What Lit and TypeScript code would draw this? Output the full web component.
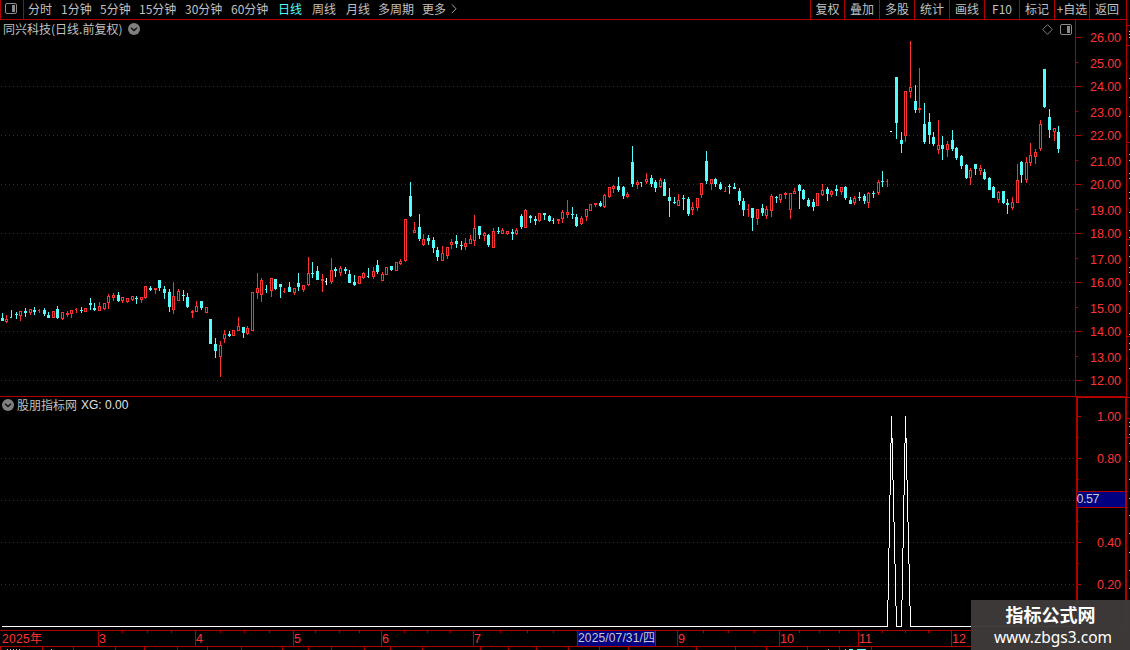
import { LitElement, html, svg, css } from "lit";
import { customElement, property } from "lit/decorators.js";
import { classMap } from "lit/directives/class-map.js";

// centre x, high, body top, body bottom, low, kind
// kind: u = rising, d = falling, U/D = left-hand tick only, W/w = unchanged (white)
const CANDLES = `
2,313,318,321,321,d 6,315,319,322,323,u 11,310,317,318,318,D 16,312,314,315,319,d 20,311,311,316,321,u
25,308,311,313,317,d 30,309,309,313,315,u 34,307,310,312,315,d 39,309,310,311,313,U 44,308,310,314,316,d
48,312,315,318,318,d 53,311,311,318,318,u 57,306,309,318,319,d 62,312,312,319,320,u 67,311,313,315,317,u
71,310,310,314,318,u 76,308,309,310,313,U 81,307,310,311,313,d 85,308,308,312,312,u 90,298,303,305,310,d
94,303,308,310,311,d 99,302,306,311,311,u 104,303,303,309,310,u 108,294,296,303,309,u 113,293,295,298,301,u
118,292,295,301,302,d 122,297,297,301,303,u 127,298,298,302,303,u 132,296,296,300,301,u 136,296,298,299,304,d
141,297,297,300,303,u 145,286,286,298,299,u 150,286,288,290,291,d 155,288,288,290,294,u 159,280,280,288,291,d
164,286,289,293,299,d 169,289,292,307,312,d 173,282,296,310,314,u 178,289,291,301,301,u 183,290,295,296,301,d
187,293,297,307,308,d 192,310,311,313,318,u 196,301,306,312,312,u 201,301,301,308,310,d 206,307,307,313,313,u
210,319,319,344,344,d 215,338,344,351,358,d 220,341,345,357,377,u 224,330,334,339,343,u 229,331,334,336,337,d
233,330,330,336,336,u 238,317,326,331,331,u 243,327,327,333,338,d 247,326,328,334,335,u 252,292,292,331,331,u
257,273,288,293,299,u 261,278,280,295,302,u 266,285,289,290,293,D 271,278,278,291,297,u 275,279,279,289,290,d
280,284,284,287,298,d 284,288,291,292,293,U 289,282,287,292,292,d 294,288,288,293,295,u 298,273,283,287,291,d
303,285,285,290,292,u 308,257,273,285,286,u 312,262,273,274,278,d 317,266,271,280,280,d 322,274,279,281,292,u
326,278,281,282,285,W 331,258,270,282,284,u 335,267,269,271,277,d 340,266,268,273,276,u 345,267,269,271,274,d
349,270,274,283,283,d 354,275,282,285,286,d 359,276,276,284,284,u 363,272,273,278,279,u 368,268,276,277,278,D
373,267,271,277,279,u 377,260,265,272,274,d 382,272,274,281,281,u 386,267,267,275,275,u 391,266,266,270,271,d
396,262,262,271,271,u 400,259,261,264,265,u 405,219,219,261,262,u 410,182,196,216,217,d 414,222,230,233,233,u
419,214,227,239,241,d 423,234,239,245,246,u 428,235,238,241,245,d 433,237,240,248,253,d 437,247,250,257,261,d
442,246,253,261,261,u 447,247,247,256,259,u 451,239,242,245,249,u 456,235,241,244,248,d 461,241,245,246,250,d
465,238,243,247,250,u 470,235,239,244,244,u 474,215,228,241,246,u 479,226,226,235,239,d 484,232,233,236,241,u
488,234,235,245,247,d 493,228,231,248,248,u 498,227,231,232,234,d 502,228,230,234,234,u 507,231,231,234,235,u
512,229,232,234,240,d 516,228,230,234,235,u 521,214,216,227,229,d 525,209,210,228,228,u 530,215,216,218,223,d
535,216,219,221,225,d 539,213,213,221,222,u 544,213,213,215,220,d 549,215,216,221,222,d 553,218,220,221,224,D
558,219,219,221,224,u 562,210,212,219,223,u 567,200,212,215,218,u 572,207,214,215,219,d 576,214,217,226,227,d
581,216,218,224,225,u 586,209,209,217,221,u 590,204,204,211,211,u 595,203,203,205,207,u 600,201,203,206,207,d
604,194,195,207,208,u 609,187,187,197,198,u 613,185,186,189,193,u 618,177,186,190,192,d 623,186,187,196,199,d
627,192,194,197,198,u 632,146,162,184,187,d 637,180,182,185,189,u 641,182,182,183,187,D 646,173,179,182,184,u
651,175,178,184,187,d 655,180,182,188,192,d 660,178,180,187,188,u 664,179,182,196,196,d 669,188,197,201,217,d
674,197,202,203,204,d 678,194,200,206,206,u 683,195,198,199,210,d 688,197,199,214,216,d 692,202,207,210,215,u
697,198,198,208,211,u 701,183,183,195,198,u 706,151,161,181,184,d 711,179,179,184,190,u 715,178,179,184,187,d
720,182,184,189,190,d 725,187,191,192,192,U 729,184,186,187,194,d 734,183,187,189,189,d 739,188,191,201,205,d
743,198,201,210,216,d 748,204,209,210,217,U 752,208,208,218,231,d 757,209,209,219,225,u 762,204,208,213,216,d
766,206,209,216,219,u 771,194,196,211,217,u 776,196,197,198,203,d 780,194,194,200,203,u 785,192,193,195,199,u
790,193,193,210,219,u 794,188,191,194,194,u 799,184,185,191,209,d 803,189,190,199,200,d 808,198,200,206,207,d
813,199,202,207,211,d 817,193,193,206,206,u 822,184,190,195,196,u 827,187,189,194,201,d 831,190,191,195,197,u
836,185,189,191,196,d 841,187,187,192,195,u 845,186,187,198,200,d 850,197,200,204,204,d 854,196,198,203,205,u
859,192,197,198,201,d 864,194,196,201,204,d 868,192,193,203,208,u 873,191,193,194,198,d 878,180,182,193,195,u
882,171,181,182,187,d 887,179,181,182,187,U 891,131,131,132,132,w 896,77,77,123,139,d 901,132,140,144,153,d
905,91,91,136,142,u 910,41,87,92,98,u 915,85,101,110,113,d 919,68,108,110,113,u 924,103,124,142,144,d
929,113,122,135,144,d 933,132,137,144,146,d 938,120,145,150,154,u 942,136,145,149,160,d 947,141,144,150,157,u
952,130,140,149,151,d 956,147,148,158,160,d 961,155,156,166,169,d 966,164,165,178,179,d 970,168,170,178,185,u
975,164,164,169,175,d 980,165,168,171,175,u 984,169,172,179,180,d 989,177,178,190,190,d 993,186,187,198,198,d
998,191,192,200,203,u 1003,191,191,203,204,d 1007,199,203,205,214,d 1012,197,202,208,210,u 1017,164,180,203,203,u
1021,161,162,175,183,d 1026,157,162,180,183,u 1030,143,155,163,166,u 1035,149,152,157,164,u 1040,120,124,149,151,u
1044,69,69,107,108,d 1049,109,117,130,138,d 1054,128,128,132,141,u 1058,126,132,149,153,d`
  .trim().split(/\s+/).map((s) => {
    const p = s.split(",");
    return { x: +p[0], high: +p[1], top: +p[2], bottom: +p[3], low: +p[4], kind: p[5] };
  });

const PERIODS = ["分时", "1分钟", "5分钟", "15分钟", "30分钟", "60分钟", "日线", "周线", "月线", "多周期", "更多"];
const TOOLS = ["复权", "叠加", "多股", "统计", "画线", "F10", "标记", "+自选", "返回"];
const PRICES = Array.from({ length: 15 }, (_, i) => ({
  text: (26 - i).toFixed(2),
  tick: Math.round(37 + i * 24.5),
  label: i % 2 ? 63.5 + (i - 1) * 24.5 : 37.5 + i * 24.5,
  major: i % 2 === 0,
}));
const XG_LABELS: [string, number][] = [["1.00", 416], ["0.80", 458], ["0.40", 542], ["0.20", 584]];
const MONTHS: [string, number][] = [
  ["3", 98], ["4", 195], ["5", 293], ["6", 381], ["7", 473], ["9", 677], ["10", 779], ["11", 858], ["12", 951],
];
const WEEKS = [122, 147, 171, 220, 244, 269, 315, 339, 359, 404, 427, 450, 500, 527, 553, 703, 728, 754, 799, 819, 839, 882, 905, 928];
const LOWER_TICKS = [0, 42, 73, 115, 144, 177, 207, 241, 282, 308, 331, 364, 390, 422, 480, 508, 536, 568, 599, 628, 696, 735, 766, 807, 839, 871];
const EDGE_LINES = [25, 45, 142, 239, 336, 397, 418, 437];
const EDGE_MARKS = [31, 34, 37, 78, 97, 116, 154, 160, 173, 178, 192, 198, 212, 230, 237, 245, 256, 267, 272, 284, 291, 313, 334, 343, 349, 368, 422, 426, 434, 443, 461, 479, 498, 515, 533, 552, 570, 588];

const gridLine = (y: number) => svg`<path class="grid" d="M1 ${y + 0.5}H1075" />`;

const shared = css`
  :host { display: block; }
  svg { display: block; shape-rendering: crispEdges; }
  .grid { stroke: #b00000; stroke-dasharray: 1 3; fill: none; }
  .line { fill: #b00000; }
  .num { font: 12.5px "Liberation Sans", sans-serif; fill: #ff3232; }
`;

@customElement("round-toggle")
class RoundToggle extends LitElement {
  static styles = css`
    :host { display: block; width: 12px; height: 12px; }
    svg { display: block; }
  `;
  render() {
    return html`<svg width="12" height="12" viewBox="0 0 12 12">
      <circle cx="6" cy="6" r="6" fill="#808080" />
      <path d="M3 4.8L6 7.6L9 4.8" fill="none" stroke="#101010" stroke-width="1.4" />
    </svg>`;
  }
}

@customElement("split-icon")
class SplitIcon extends LitElement {
  static styles = css`
    :host { display: block; width: 12px; height: 11px; }
    svg { display: block; }
  `;
  render() {
    return html`<svg width="12" height="11" viewBox="0 0 12 11">
      <rect x=".5" y=".5" width="11" height="10" rx="1.5" fill="none" stroke="#8c8c8c" />
      <rect x="7" y="2" width="3" height="7" fill="#8c8c8c" />
    </svg>`;
  }
}

@customElement("top-bar")
class TopBar extends LitElement {
  @property() active = "日线";
  static styles = css`
    :host {
      display: flex; box-sizing: border-box; width: 1127px; height: 20px;
      border-bottom: 1px solid #b00000; color: #c0c0c0;
      font: 12px/17px "Noto Sans CJK SC", sans-serif; white-space: nowrap;
    }
    .toggle { box-sizing: border-box; width: 24px; padding: 3px 0 0 4px; border: solid #b00000; border-width: 0 1px; }
    .periods {
      display: grid; margin-left: 4px; flex: 1;
      grid-template-columns: 33px 39px 39px 46px 46px 47px 34px 34px 32px 44px 28px 10px;
    }
    .active { color: #54fcfc; }
    .more { margin-top: 4px; }
    .tools { display: grid; grid-template-columns: 34px repeat(7, 35px) 38px; }
    .tool { border-left: 1px solid #b00000; text-align: center; }
    .tool:last-child { border-right: 1px solid #b00000; padding-right: 2px; }
  `;
  render() {
    return html`
      <div class="toggle"><split-icon></split-icon></div>
      <div class="periods">
        ${PERIODS.map((p) => html`<span class=${classMap({ active: p === this.active })}>${p}</span>`)}
        <svg class="more" width="8" height="10" viewBox="0 0 8 10"><path d="M2 .5L6 4.8L2 9" fill="none" stroke="#a0a0a0" /></svg>
      </div>
      <div class="tools">${TOOLS.map((t) => html`<span class="tool">${t}</span>`)}</div>
    `;
  }
}

@customElement("price-chart")
class PriceChart extends LitElement {
  static styles = [shared, css`
    .title {
      display: flex; align-items: center; box-sizing: border-box; height: 20px; padding: 0 3px 2px; gap: 6px; color: #c0c0c0;
      font: 12px/18px "Noto Sans CJK SC", sans-serif;
    }
    .name { width: 119px; white-space: nowrap; }
    .title svg { margin: 0 1px 0 auto; }
    .u { fill: #ff3232; } .d { fill: #54fcfc; } .w { fill: #fff; } .hole { fill: #000; }
  `];
  private candle(c: (typeof CANDLES)[number]) {
    const cls = c.kind.toLowerCase();
    const left = c.kind !== c.kind.toLowerCase() || c.kind === "w";
    const h = c.bottom - c.top;
    return svg`<g class=${cls}>
      ${c.kind === "w" ? null : svg`<rect x=${c.x} y=${c.high} width="1" height=${c.low - c.high} />`}
      <rect x=${c.x - 1} y=${c.top} width=${left ? 2 : 3} height=${h} />
      ${c.kind === "u" && h > 2 ? svg`<rect class="hole" x=${c.x} y=${c.top + 1} width="1" height=${h - 2} />` : null}
    </g>`;
  }
  render() {
    return html`
      <div class="title">
        <span class="name">同兴科技(日线.前复权)</span><round-toggle></round-toggle>
        <svg width="11" height="11" viewBox="0 0 11 11"><path d="M5.5 .7L10.3 5.5L5.5 10.3L.7 5.5Z" fill="none" stroke="#808080" shape-rendering="auto" /></svg>
        <split-icon></split-icon>
      </div>
      <svg width="1075" height="356" viewBox="0 40 1075 356">
        ${[86, 135, 184, 233, 282, 331, 380].map(gridLine)}
        ${CANDLES.map((c) => this.candle(c))}
      </svg>`;
  }
}

@customElement("signal-chart")
class SignalChart extends LitElement {
  static styles = [shared, css`
    :host { border-top: 1px solid #b00000; }
    .title {
      display: flex; align-items: center; box-sizing: border-box; height: 17px; padding: 0 0 2px 2px; color: #c0c0c0;
      font: 12px/15px "Noto Sans CJK SC", sans-serif;
    }
    .name { margin: 0 4px 0 3px; }
    .value { padding-top: 2px; font: 12px/15px "Liberation Sans", sans-serif; color: #e0e0e0; }
    .signal { fill: #fff; }
  `];
  private spike(x: number) {
    const steps = [[600, 627], [548, 600], [495, 548], [443, 495], [416, 443], [438, 480], [480, 522], [522, 564], [564, 606], [606, 627]];
    return steps.map(([a, b], i) => svg`<rect x=${x + i} y=${a} width="1" height=${b - a} />`);
  }
  render() {
    return html`
      <div class="title"><round-toggle></round-toggle><span class="name">股朋指标网</span><span class="value">XG: 0.00</span></div>
      <svg width="1075" height="216" viewBox="0 414 1075 216">
        ${[458, 500, 542, 584].map(gridLine)}
        <g class="signal">
          <rect x="2" y="626" width="885" height="1" />
          <rect x="896" y="626" width="5" height="1" />
          <rect x="910" y="626" width="165" height="1" />
          ${this.spike(887)}${this.spike(901)}
        </g>
      </svg>`;
  }
}

@customElement("value-axis")
class ValueAxis extends LitElement {
  static styles = [shared, css`
    .mark { fill: #c0c0c0; }
    .cursor { fill: #000080; }
    .cursor-text { fill: #c8c8c8; }
  `];
  render() {
    return html`<svg width="55" height="610" viewBox="1075 20 55 610">
      <g class="line">
        <rect x="1075" y="20" width="1" height="377" />
        <rect x="1126" y="20" width="1" height="610" />
        <rect x="1076" y="396" width="2" height="234" />
        <rect x="1125" y="396" width="1" height="234" />
        <rect x="1076" y="396" width="51" height="2" />
        ${PRICES.map((p) => svg`<rect x="1076" y=${p.tick} width=${p.major ? 5 : 2} height="1" />`)}
        ${[416, 458, 542, 584].map((y) => svg`<rect x="1078" y=${y} width="3" height="1" />`)}
        ${[437, 479, 521, 563].map((y) => svg`<rect x="1078" y=${y} width="1" height="1" />`)}
        ${EDGE_LINES.map((y) => svg`<rect x="1127" y=${y} width="3" height="1" />`)}
      </g>
      ${EDGE_MARKS.map((y) => svg`<rect class="mark" x="1129" y=${y} width="1" height="1" />`)}
      ${PRICES.map((p) => svg`<text class="num" x="1090" y=${p.label + 4.5} textLength="31">${p.text}</text>`)}
      ${XG_LABELS.map(([t, y]) => svg`<text class="num" x="1097" y=${y + 5} textLength="24">${t}</text>`)}
      <rect class="line" x="1077" y="491" width="49" height="17" />
      <rect class="cursor" x="1077" y="492" width="48" height="15" />
      <text class="num cursor-text" x="1076.5" y="503" textLength="23">0.57</text>
    </svg>`;
  }
}

@customElement("time-axis")
class TimeAxis extends LitElement {
  static styles = [shared, css`
    .cjk { font: 12px "Liberation Sans", "Noto Sans CJK SC", sans-serif; }
    .cursor { fill: #000080; }
    .cursor-text { fill: #c8c8c8; }
    .sliver { fill: #c0c0c0; } .sliver-cyan { fill: #54fcfc; }
  `];
  render() {
    return html`<svg width="1130" height="20" viewBox="0 630 1130 20">
      <g class="line">
        <rect x="0" y="630" width="1127" height="1" />
        <rect x="0" y="646" width="1127" height="1" />
        ${MONTHS.map(([, x]) => svg`<rect x=${x} y="630" width="1" height="17" />`)}
        ${WEEKS.map((x) => svg`<rect x=${x} y="631" width="1" height="2" />`)}
        ${LOWER_TICKS.map((x) => svg`<rect x=${x} y="647" width="1" height="3" />`)}
        <rect x="577" y="630" width="79" height="17" />
      </g>
      <rect class="cursor" x="578" y="631" width="77" height="15" />
      <text class="num cjk" x="2" y="643" textLength="40">2025年</text>
      ${MONTHS.map(([t, x]) => svg`<text class="num" x=${x + 1} y="643">${t}</text>`)}
      <text class="num cjk cursor-text" x="578" y="642" textLength="77">2025/07/31/四</text>
      ${[7, 10, 13, 16, 19, 51, 828, 845].map((x) => svg`<rect class="sliver" x=${x} y="649" width="1" height="1" />`)}
      <rect class="sliver-cyan" x="849" y="649" width="4" height="1" />
      <rect class="sliver-cyan" x="857" y="649" width="9" height="1" />
    </svg>`;
  }
}

@customElement("app-root")
class AppRoot extends LitElement {
  static styles = css`
    :host { display: block; position: relative; width: 1130px; height: 650px; overflow: hidden; background: #000; }
    .body { display: grid; grid-template-columns: 1075px 55px; height: 610px; }
    .watermark {
      position: absolute; right: 0; bottom: 0; width: 159px; height: 50px; box-sizing: border-box; padding-top: 1px;
      background: rgba(62, 58, 58, .97); color: #fff; text-align: center;
    }
    .site { font: bold 18px/26px "Noto Sans CJK SC", sans-serif; }
    .url { padding-left: 5px; font: 15.5px/20px "Noto Sans", sans-serif; }
  `;
  render() {
    return html`
      <top-bar></top-bar>
      <div class="body">
        <div class="plots"><price-chart></price-chart><signal-chart></signal-chart></div>
        <value-axis></value-axis>
      </div>
      <time-axis></time-axis>
      <div class="watermark"><div class="site">指标公式网</div><div class="url">www.zbgs3.com</div></div>
    `;
  }
}
